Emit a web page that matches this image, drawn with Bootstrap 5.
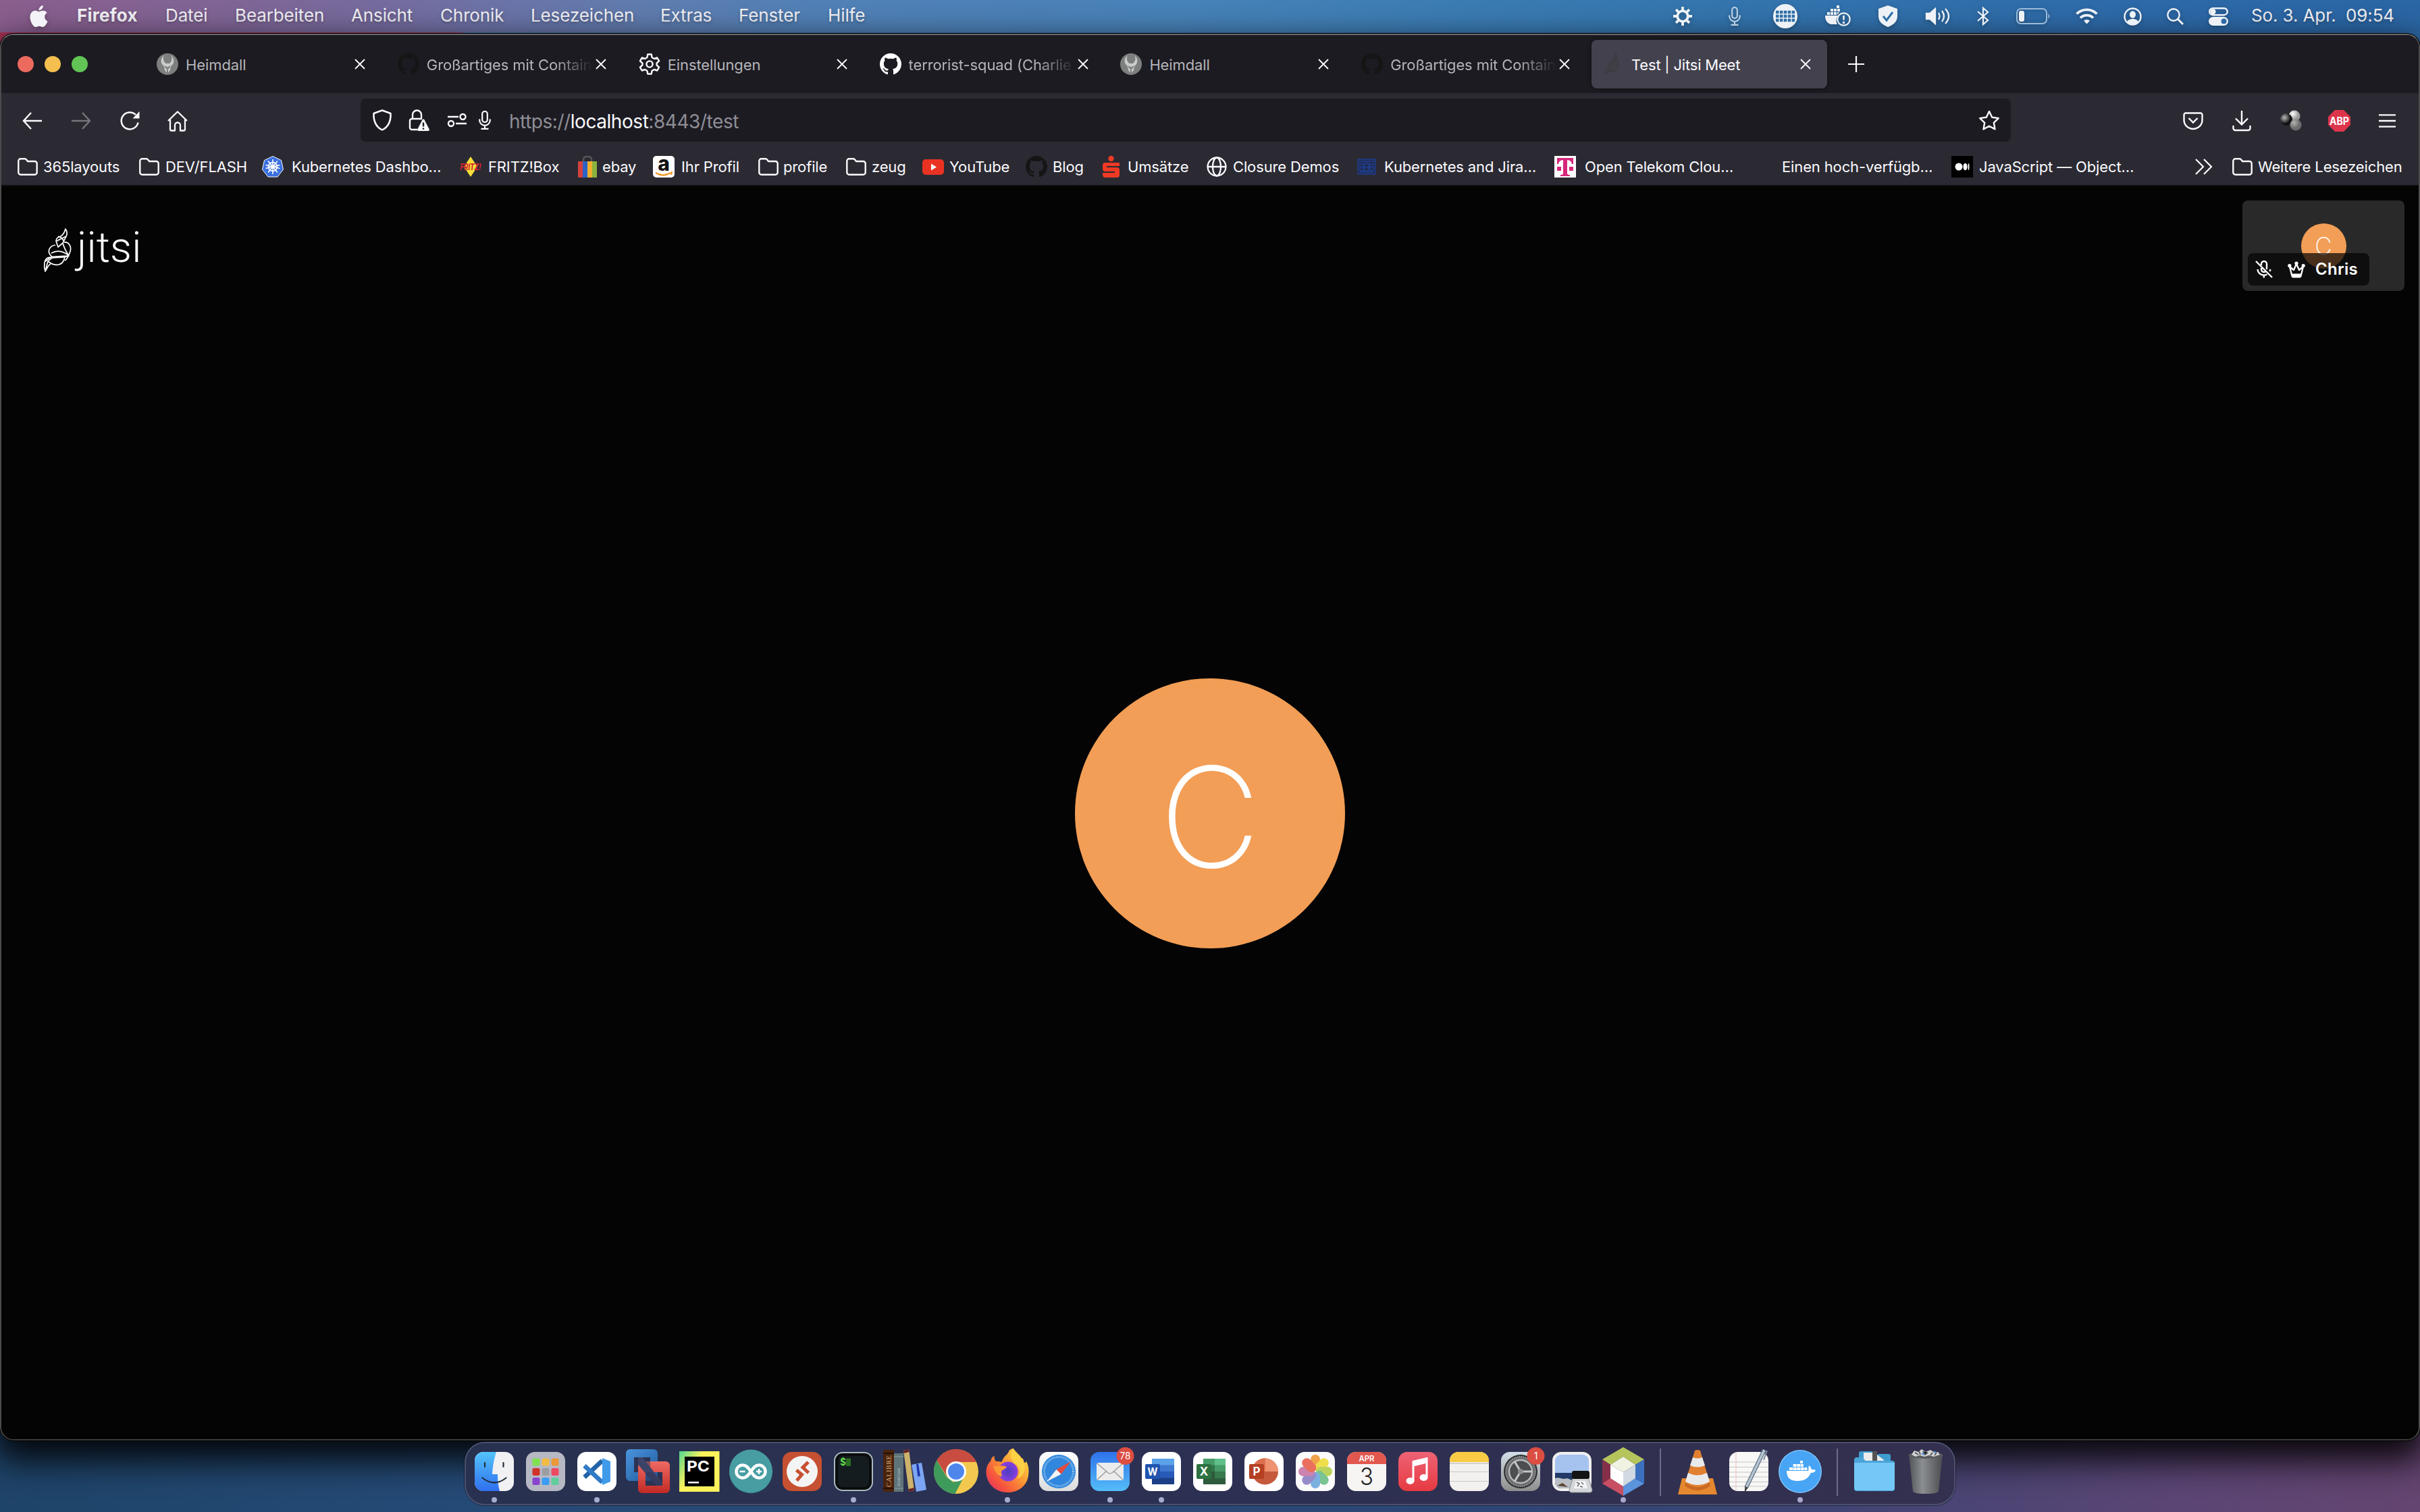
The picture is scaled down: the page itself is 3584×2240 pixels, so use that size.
<!DOCTYPE html>
<html lang="de" data-bs-theme="dark">
<head>
<meta charset="utf-8">
<title>Test | Jitsi Meet</title>
<link rel="stylesheet" href="https://cdn.jsdelivr.net/npm/bootstrap@5.3.0/dist/css/bootstrap.min.css">
<style>
html,body{height:100%}
body{font-family:Inter,"Noto Sans",sans-serif;color:#fbfbfe;overflow:hidden;
 background:linear-gradient(90deg,rgba(0,0,0,0) 60%,rgba(116,66,110,.6) 100%) 0 2100px/100% 140px no-repeat,
 linear-gradient(90deg,#1f4469,#254a76 20%,#2e4574 75%,#46487a 90%,#4d4873) 0 2100px/100% 140px no-repeat,
 linear-gradient(90deg,#a83257 0,#a83257 680px,#3f6ea2 690px,#2c68a6)}
a{color:inherit;text-decoration:none}
svg{display:block;overflow:visible}
svg text{font-family:Inter,sans-serif}
/* system menu */
.sysbar{height:48px;font-size:26px;letter-spacing:-.12px;line-height:46px;white-space:nowrap;color:#f3f2f6;
 background:linear-gradient(90deg,#8a5e8d 0,#7f6596 340px,#766b9e 560px,#6a74a8 760px,#5d7db0 1000px,#5180b6 1200px,#4782b8 1750px,#3b7cb3 2150px,#3374ae 2600px,#2d69a8 3200px,#2b66a4);
 display:grid;align-items:center;text-shadow:0 2px 4px rgba(0,0,0,.25);
 grid-template-columns:44px 70px 131px 103px 172px 132px 134px 192px 116px 132px 1252px 82px 66px 77px 78px 71px 75px 59px 88px 71px 64px 62px 63px 140px 1fr}
.sysbar>a,.sysbar>span{padding-bottom:2px}
.sysbar>a.fw-bold{letter-spacing:.25px}
.sysbar>svg{filter:drop-shadow(0 2px 3px rgba(0,0,0,.25))}
/* browser window */
.win{margin:2px 0 0;height:2084px;border:2px solid #4b4b4c;border-top-color:#6a6a6c;border-bottom-color:#3a3a3a;border-radius:20px;overflow:hidden;background:#040404;box-shadow:0 0 0 1px #000,0 22px 50px 8px rgba(0,0,0,.9)}
.tabstrip{height:86px;background:#1c1b21;padding-left:214px;position:relative;font-size:22px}
.lights{width:104px;height:24px;margin-left:-190px;margin-right:86px}
.lights i{width:24px;height:24px;border-radius:50%}
.tb{width:349px;height:72px;margin-right:7.85px;padding:0 24px 0 16px;border-radius:8px;color:#b5b4ba;flex:none}
.tb.active{background:#42414d;color:#fbfbfe;box-shadow:0 0 6px rgba(0,0,0,.5)}
.tb .lbl{width:250px;margin-left:11px;white-space:nowrap;flex:none;padding-top:3px;letter-spacing:-.1px}
.tb.active .lbl{letter-spacing:-.2px}
.tb .cut{-webkit-mask:linear-gradient(90deg,#000 190px,transparent 246px);mask:linear-gradient(90deg,#000 190px,transparent 246px)}
.tools{height:82px;background:#2b2a33;display:grid;align-items:center;color:#fbfbfe;
 grid-template-columns:31px 72.5px 72.5px 70px 286px 2444px 255px 73px 71px 71px 75px 1fr}
.url{height:64px;background:#1c1b22;border-radius:8px;display:grid;align-items:center;font-size:28px;letter-spacing:-.45px;white-space:nowrap;margin-bottom:2px;
 grid-template-columns:17px 55px 57px 46px 45px 2176px 1fr}
.url>span:last-of-type{padding-top:3px}
.dim{color:#8f8e96}
.marks{height:54px;background:#2b2a33;display:grid;align-items:center;font-size:22px;letter-spacing:-.14px;white-space:nowrap;
 grid-template-columns:24px 38px 142px 39px 143px 44px 249px 42px 133px 36px 75px 42px 114px 37px 93px 38px 75px 40px 113px 40px 74px 37px 117px 39px 184px 40px 252px 45px 253px 39px 251px 41px 320px 55px 38px 1fr}
.marks a{display:contents}
.marks a>span{padding-top:1px}
.marks a>span:empty{padding:0}
/* meeting */
.stage{height:1860px;border-top:2px solid #0e0e11;background:#040404;position:relative}
.brand{position:absolute;left:62px;top:62px;font-family:Roboto,sans-serif;font-weight:300;font-size:63px;line-height:64px;letter-spacing:.1px;color:#fff}
.brand span{margin-top:-3px;margin-left:6px}
.ava{width:400px;height:400px;border-radius:50%;background:#f29e56;color:#fff;font-weight:200;font-size:206px;line-height:400px}
.tile{position:absolute;right:21px;top:21px;width:240px;height:134px;border-radius:8px;background:#292929}
.ava-s{width:67px;height:67px;border-radius:50%;background:#f29e56;color:#fff;font-weight:200;font-size:35px;line-height:67px}
.tag{position:absolute;left:8px;top:78px;width:180px;height:48px;border-radius:8px;background:rgba(4,4,4,.72);font-weight:600;font-size:24px;letter-spacing:.3px;color:#fff;
 display:grid;align-items:center;grid-template-columns:11px 48px 41px 1fr}
/* dock */
.dockbar{height:94px;width:2208px;border-radius:30px;border:2px solid #4b506e;padding:0 4px;background:linear-gradient(90deg,#283150,#2c3052 50%,#34304f);box-shadow:0 0 0 1px rgba(0,0,0,.4)}
.dockbar svg{width:76px;height:94px;margin-top:-2px;flex:none}
.rule{width:2px;height:70px;margin:0 16px 4px;background:#6c6b88;align-self:center}
</style>
<script src="https://cdn.jsdelivr.net/npm/bootstrap@5.3.0/dist/js/bootstrap.bundle.min.js"></script>
</head>
<body class="d-flex flex-column m-0">
<svg width="0" height="0" class="position-absolute">
<defs>
<symbol id="gh" viewBox="0 0 16 16"><path d="M8 0C3.58 0 0 3.58 0 8c0 3.54 2.29 6.53 5.47 7.59.4.07.55-.17.55-.38 0-.19-.01-.82-.01-1.49-2.01.37-2.53-.49-2.69-.94-.09-.23-.48-.94-.82-1.13-.28-.15-.68-.52-.01-.53.63-.01 1.08.58 1.23.82.72 1.21 1.87.87 2.33.66.07-.52.28-.87.51-1.07-1.78-.2-3.64-.89-3.64-3.95 0-.87.31-1.59.82-2.15-.08-.2-.36-1.02.08-2.12 0 0 .67-.21 2.2.82.64-.18 1.32-.27 2-.27.68 0 1.36.09 2 .27 1.53-1.04 2.2-.82 2.2-.82.44 1.1.16 1.92.08 2.12.51.56.82 1.27.82 2.15 0 3.07-1.87 3.75-3.65 3.95.29.25.54.73.54 1.48 0 1.07-.01 1.93-.01 2.2 0 .21.15.46.55.38A8.013 8.013 0 0016 8c0-4.42-3.58-8-8-8z"/></symbol>
<symbol id="x" viewBox="0 0 16 16"><path d="M1 1l14 14M15 1L1 15" stroke="#fbfbfe" stroke-width="1.8" fill="none"/></symbol>
<symbol id="folder" viewBox="0 0 30 26"><path d="M1.3 4.5a3.2 3.2 0 013.2-3.2h6.2c1.4 0 2 .6 3 1.9l1.400 1.800h10.400a3.200 3.200 0 013.200 3.200v13.300a3.200 3.200 0 01-3.200 3.200H4.500a3.200 3.200 0 01-3.200-3.200z" fill="none" stroke="#fbfbfe" stroke-width="2.400"/></symbol>
<symbol id="heim" viewBox="0 0 32 32"><circle cx="16" cy="16" r="16" fill="#7c7f7e"/><path d="M10.500 3c-4 4-5 9-2.500 13 1 1.500 2.500 2 3 4l1 5 4 5 4-5 1-5c.5-2 2-2.500 3-4 2.500-4 1.500-9-2.500-13 2 5 1 9-2.500 12h-5.500c-3.500-3-4.500-7-3-12z" fill="#c9cccb"/><path d="M11 18l5 2.500 5-2.500-2 4-3 2-3-2zM15 24h2v6h-2z" fill="#7c7f7e"/></symbol>
<symbol id="mic" viewBox="0 0 18 28"><rect x="5.200" y="1" width="7.600" height="16" rx="3.800" fill="none" stroke="currentColor" stroke-width="2.200"/><path d="M1.200 12.500v1.500a7.800 7.800 0 0015.600 0v-1.500M9 22v4.500M3.500 26.800h11" fill="none" stroke="currentColor" stroke-width="2.200"/></symbol>
<linearGradient id="gb" x1="0" y1="0" x2="0" y2="1"><stop offset="0" stop-color="#54c4fa"/><stop offset="1" stop-color="#2f6fef"/></linearGradient>
<linearGradient id="gm" x1="0" y1="0" x2="0" y2="1"><stop offset="0" stop-color="#2f72ec"/><stop offset="1" stop-color="#54bdf8"/></linearGradient>
<linearGradient id="gw" x1="0" y1="0" x2="0" y2="1"><stop offset="0" stop-color="#fff"/><stop offset="1" stop-color="#dcdcdc"/></linearGradient>
<linearGradient id="gr" x1="0" y1="0" x2="0" y2="1"><stop offset="0" stop-color="#ee6376"/><stop offset="1" stop-color="#e63a41"/></linearGradient>
<linearGradient id="gf" x1="1" y1="0" x2="0" y2="1"><stop offset="0" stop-color="#fff04e"/><stop offset=".45" stop-color="#fb9633"/><stop offset=".75" stop-color="#f5503f"/><stop offset="1" stop-color="#d92a78"/></linearGradient>
<radialGradient id="gp"><stop offset="0" stop-color="#4c3fc0"/><stop offset="1" stop-color="#8a3fe0"/></radialGradient>
<linearGradient id="gt" x1="0" y1="0" x2="1" y2="0"><stop offset="0" stop-color="#505355"/><stop offset=".4" stop-color="#8c8f92"/><stop offset="1" stop-color="#4a4c50"/></linearGradient>
<linearGradient id="gpc" x1="0" y1="0" x2="1" y2=".6"><stop offset="0" stop-color="#4fd68f"/><stop offset=".45" stop-color="#fcf25b"/><stop offset="1" stop-color="#fcf25b"/></linearGradient>
<linearGradient id="gsp" x1="0" y1="0" x2="0" y2="1"><stop offset="0" stop-color="#d2dee8"/><stop offset="1" stop-color="#8d8d8b"/></linearGradient>
<linearGradient id="gvb" x1="0" y1="0" x2="1" y2="1"><stop offset="0" stop-color="#4a96de"/><stop offset="1" stop-color="#1d579a"/></linearGradient>
<linearGradient id="gvr" x1="0" y1="0" x2="0" y2="1"><stop offset="0" stop-color="#ee6a63"/><stop offset="1" stop-color="#c22a24"/></linearGradient>
<radialGradient id="b1" cx=".35" cy=".3"><stop offset="0" stop-color="#fff"/><stop offset="1" stop-color="#999"/></radialGradient>
<radialGradient id="b2" cx=".35" cy=".35"><stop offset="0" stop-color="#bbb"/><stop offset="1" stop-color="#111"/></radialGradient>
</defs></svg>

<nav class="sysbar">
<span></span>
<svg width="27" height="32" viewBox="2 0 20 24" fill="#f3f2f6"><path d="M12.152 6.896c-.948 0-2.415-1.078-3.960-1.040-2.040.027-3.910 1.183-4.961 3.014-2.117 3.675-.546 9.103 1.519 12.090 1.013 1.454 2.208 3.090 3.792 3.039 1.520-.065 2.090-.987 3.935-.987 1.831 0 2.350.987 3.960.948 1.637-.026 2.676-1.480 3.676-2.948 1.156-1.688 1.636-3.325 1.662-3.415-.039-.013-3.182-1.221-3.220-4.857-.026-3.040 2.480-4.494 2.597-4.559-1.429-2.090-3.623-2.324-4.390-2.376-2-.156-3.675 1.090-4.610 1.090zM15.530 3.830c.843-1.012 1.400-2.427 1.245-3.830-1.207.052-2.662.805-3.532 1.818-.780.896-1.454 2.338-1.273 3.714 1.338.104 2.715-.688 3.559-1.701"/></svg>
<a class="fw-bold" href="#">Firefox</a><a href="#">Datei</a><a href="#">Bearbeiten</a><a href="#">Ansicht</a><a href="#">Chronik</a><a href="#">Lesezeichen</a><a href="#">Extras</a><a href="#">Fenster</a><a href="#">Hilfe</a>
<svg width="28" height="28" viewBox="0 0 28 28" fill="none" stroke="#eef2f6"><circle cx="14" cy="14" r="7.800" stroke-width="3.800"/><path d="M14 0v5M14 23v5M0 14h5M23 14h5M4.100 4.100l3.500 3.500M20.400 20.400l3.500 3.500M23.900 4.100l-3.500 3.500M7.600 20.400l-3.500 3.500" stroke-width="3.800"/></svg>
<svg width="18" height="28" color="#b9cfe3"><use href="#mic"/></svg>
<svg width="36" height="36" viewBox="0 0 36 36"><circle cx="18" cy="18" r="18" fill="#eef2f6"/><g stroke="#2f6fa8" stroke-width="4.500" stroke-dasharray="4.500 1.400"><path d="M4 12h28.500M4 18h28.500M4 24h28.500"/></g></svg>
<svg width="38" height="32" viewBox="0 0 38 32" fill="#eef2f6"><path d="M0 15h19a12 12 0 00-1 13H9C3 27 0 22 0 15zM3 10h4v4H3zM8 10h4v4H8zM13 10h4v4h-4zM8 5h4v4H8zM13 5h4v4h-4zM17 0h4v4h-4zM18 5h4v4h-4zM18 10h3l-3 4z"/><circle cx="27.500" cy="20.500" r="9.200" fill="none" stroke="#eef2f6" stroke-width="2.200"/><path d="M26 15h3l-.5 7h-2zM26 24h3v3h-3z"/></svg>
<svg width="30" height="32" viewBox="0 0 30 32"><path d="M15 0l14 5v11c0 8-6 13-14 16C7 29 1 24 1 16V5z" fill="#eef2f6"/><path d="M8 16l5 6 9-12" fill="none" stroke="#2f6fa8" stroke-width="3"/></svg>
<svg width="36" height="26" viewBox="0 0 36 26" fill="none" stroke="#eef2f6" stroke-width="2.300"><path d="M1 9v8h5l8 7V2L6 9z" fill="#eef2f6"/><path d="M19 8q3 5 0 10M24 5q6 8 0 16M29 2q10 11 0 22"/></svg>
<svg width="20" height="28" viewBox="0 0 20 28"><path d="M2 7l15 13-7 6V2l7 6L2 21" fill="none" stroke="#eef2f6" stroke-width="2.200"/></svg>
<svg width="51" height="24" viewBox="0 0 51 24"><rect x="1" y="1" width="44" height="22" rx="6" fill="none" stroke="#9bbbd9" stroke-width="2"/><rect x="4" y="4" width="8" height="16" rx="3" fill="#eef2f6"/><path d="M47.500 8q4 4 0 8z" fill="#9bbbd9"/></svg>
<svg width="33" height="24" viewBox="0 0 33 24" fill="none" stroke="#eef2f6" stroke-width="3.800"><path d="M1.500 8.500a21.500 21.500 0 0130 0M7 14.500a13.500 13.500 0 0119 0"/><path d="M16.500 23.500l-4.500-4.700a6.500 6.500 0 019 0z" fill="#eef2f6" stroke="none"/></svg>
<svg width="27" height="27" viewBox="0 0 27 27"><circle cx="13.500" cy="13.500" r="12" fill="none" stroke="#eef2f6" stroke-width="2.400"/><ellipse cx="13.500" cy="10.500" rx="4.500" ry="5.200" fill="#eef2f6"/><path d="M5 21.500c2-6 15-6 17 0a12 12 0 01-17 0z" fill="#eef2f6"/></svg>
<svg width="25" height="25" viewBox="0 0 25 25" fill="none" stroke="#eef2f6"><circle cx="10" cy="10" r="8.700" stroke-width="2.400"/><path d="M16.500 16.500l7.500 7.500" stroke-width="3"/></svg>
<svg width="30" height="27" viewBox="0 0 30 27"><rect x="1.200" y="1.200" width="26.500" height="10" rx="5" fill="none" stroke="#eef2f6" stroke-width="2.400"/><circle cx="6.500" cy="6.200" r="4" fill="#eef2f6"/><rect x="0" y="14" width="29" height="13" rx="6.500" fill="#eef2f6"/><circle cx="22.500" cy="20.500" r="4" fill="#2f6aa6"/></svg>
<span>So. 3. Apr.</span><span>09:54</span>
</nav>

<main class="win">
<div class="tabstrip d-flex align-items-center">
<div class="lights d-flex justify-content-between flex-shrink-0"><i style="background:#ec6a5e"></i><i style="background:#f4bf4f"></i><i style="background:#61c454"></i></div>
<div class="tb d-flex align-items-center"><svg width="32" height="32"><use href="#heim"/></svg><span class="lbl">Heimdall</span><svg width="16" height="16" class="ms-auto"><use href="#x"/></svg></div>
<div class="tb d-flex align-items-center"><svg width="32" height="32" fill="#151515"><use href="#gh"/></svg><span class="lbl cut">Großartiges mit Contain</span><svg width="16" height="16" class="ms-auto"><use href="#x"/></svg></div>
<div class="tb d-flex align-items-center"><svg width="32" height="32" viewBox="0 0 32 32" fill="none" stroke="#fbfbfe" stroke-width="2.400"><path d="M13.300 1.500h5.400l1 4.700 3.200 1.800 4.400-1.500 2.800 4.800-3.500 3.200v3l3.500 3.200-2.800 4.800-4.400-1.500-3.200 1.800-1 4.700h-5.400l-1-4.700L9.100 24l-4.400 1.500-2.800-4.800 3.500-3.200v-3l-3.500-3.200L4.700 6.500 9.100 8l3.200-1.800z" stroke-linejoin="round"/><circle cx="16" cy="16" r="4.600"/></svg><span class="lbl">Einstellungen</span><svg width="16" height="16" class="ms-auto"><use href="#x"/></svg></div>
<div class="tb d-flex align-items-center"><svg width="32" height="32" fill="#fff"><use href="#gh"/></svg><span class="lbl cut">terrorist-squad (Charlie</span><svg width="16" height="16" class="ms-auto"><use href="#x"/></svg></div>
<div class="tb d-flex align-items-center"><svg width="32" height="32"><use href="#heim"/></svg><span class="lbl">Heimdall</span><svg width="16" height="16" class="ms-auto"><use href="#x"/></svg></div>
<div class="tb d-flex align-items-center"><svg width="32" height="32" fill="#151515"><use href="#gh"/></svg><span class="lbl cut">Großartiges mit Contain</span><svg width="16" height="16" class="ms-auto"><use href="#x"/></svg></div>
<div class="tb active d-flex align-items-center"><svg width="32" height="32" viewBox="0 0 32 32"><path d="M20 1c3 5 1 8-1 9 4 1 6 5 4 10-1 4-6 8-11 7-4 0-5 2-6 4-1-4-1-7 2-9 2-1 2-4 2-6 1-4 4-4 6-5-1-5 3-6 4-10z" fill="#3f3f45" stroke="#37373b"/></svg><span class="lbl">Test | Jitsi Meet</span><svg width="16" height="16" class="ms-auto"><use href="#x"/></svg></div>
<svg width="24" height="24" viewBox="0 0 24 24" style="margin-left:23px"><path d="M12 0v24M0 12h24" stroke="#fbfbfe" stroke-width="2.200"/></svg>
</div>

<div class="tools">
<span></span>
<svg width="30" height="26" viewBox="0 0 30 26" fill="none" stroke="#fbfbfe" stroke-width="2.400"><path d="M29 13H2M13 1L2 13l11 12"/></svg>
<svg width="30" height="26" viewBox="0 0 30 26" fill="none" stroke="#76757c" stroke-width="2.400"><path d="M0 13h27M16 1l11 12-11 12"/></svg>
<svg width="30" height="30" viewBox="0 0 30 30"><path d="M26.500 17.500A12.500 12.500 0 1123 6" fill="none" stroke="#fbfbfe" stroke-width="2.500"/><path d="M28.500 1v10.500H18.500z" fill="#fbfbfe"/></svg>
<svg width="30" height="31" viewBox="0 0 30 31" fill="none" stroke="#fbfbfe" stroke-width="2.300" stroke-linejoin="round"><path d="M1 15L15 1.500 29 15M4 13v14.500a2 2 0 002 2h5v-8a4 4 0 018 0v8h5a2 2 0 002-2V13"/></svg>
<div class="url">
<span></span>
<svg width="30" height="32" viewBox="0 0 30 32"><path d="M15 1.500L27.500 6q.8 18-12.500 24.500Q1.700 24 2.500 6z" fill="none" stroke="#fbfbfe" stroke-width="2.500" stroke-linejoin="round"/></svg>
<svg width="30" height="32" viewBox="0 0 30 32"><path d="M5 14V8a6.500 6.500 0 0113 0v6M12 30H4a3 3 0 01-3-3V17a3 3 0 013-3h15" fill="none" stroke="#fbfbfe" stroke-width="2.400"/><path d="M21 14.500a1.500 1.500 0 011.500 1L30 30q0 2-2 2H14q-2 0-2-2l7.500-14.500a1.500 1.500 0 011.500-1z" fill="#fbfbfe"/><path d="M21 19.500v6M21 27.500v2.200" stroke="#1c1b22" stroke-width="2.400"/></svg>
<svg width="28" height="22" viewBox="0 0 28 22" fill="none" stroke="#fbfbfe" stroke-width="2.400"><path d="M0 6h16M12 16h16"/><circle cx="22.500" cy="6" r="4"/><circle cx="5" cy="16" r="4"/></svg>
<svg width="18" height="28"><use href="#mic"/></svg>
<span><span class="dim">https://</span>localhost<span class="dim">:8443/test</span></span>
<svg width="32" height="31" viewBox="0 0 32 31"><path d="M16 2l4.200 8.800 9.600 1.300-7 6.700 1.700 9.600-8.500-4.700-8.500 4.700 1.700-9.600-7-6.700 9.600-1.300z" fill="none" stroke="#fbfbfe" stroke-width="2.400" stroke-linejoin="round"/></svg>
</div>
<span></span>
<svg width="30" height="26" viewBox="0 0 30 26" fill="none" stroke="#fbfbfe" stroke-width="2.400"><path d="M4 1.500h22a2.500 2.500 0 012.500 2.500v8a13.500 13 0 01-27 0V4A2.500 2.500 0 014 1.500z"/><path d="M8.500 9l6.500 6.500L21.500 9"/></svg>
<svg width="28" height="30" viewBox="0 0 28 30" fill="none" stroke="#fbfbfe" stroke-width="2.400"><path d="M14 0v20M5 11.500l9 9 9-9M1.500 22v4a3 3 0 003 3h19a3 3 0 003-3v-4"/></svg>
<svg width="32" height="32" viewBox="0 0 32 32"><circle cx="21" cy="9" r="8.500" fill="url(#b1)"/><circle cx="9" cy="14" r="9" fill="url(#b2)"/><circle cx="23" cy="22" r="8.500" fill="url(#b1)" style="filter:brightness(.7)"/></svg>
<svg width="33" height="32" viewBox="0 0 33 32"><path d="M10 0h13l10 10v12L23 32H10L0 22V10z" fill="#de354c"/><text x="16.500" y="21.500" font-size="15.500" font-weight="700" fill="#fff" text-anchor="middle" textLength="29" lengthAdjust="spacingAndGlyphs">ABP</text></svg>
<svg width="25" height="20" viewBox="0 0 25 20"><path d="M0 1.300h25M0 10h25M0 18.700h25" stroke="#fbfbfe" stroke-width="2.300"/></svg>
</div>

<div class="marks">
<span></span>
<a href="#"><svg width="30" height="26"><use href="#folder"/></svg><span>365layouts</span></a>
<a href="#"><svg width="30" height="26"><use href="#folder"/></svg><span>DEV/FLASH</span></a>
<a href="#"><svg width="32" height="32" viewBox="0 0 32 32"><path d="M16 .5l12.500 6L31.500 20 23 31H9L.5 20l3-13.500z" fill="#3a6fe0" stroke="#fff"/><g stroke="#fff" stroke-width="1.600" fill="none"><circle cx="16" cy="16" r="6.500"/><path d="M16 5v22M5.500 13.500l21 5M9 24.500l14-17M9 7.500l14 17M26.500 13.500l-21 5"/></g></svg><span>Kubernetes Dashbo…</span></a>
<a href="#"><svg width="32" height="32" viewBox="0 0 32 32"><path d="M16 1l10 15-10 15L6 16z" fill="#f6de3b"/><text x="16" y="20.500" font-size="13" font-weight="800" font-style="italic" fill="#d8242f" text-anchor="middle" textLength="31" lengthAdjust="spacingAndGlyphs">FRITZ!</text></svg><span>FRITZ!Box</span></a>
<a href="#"><svg width="28" height="32" viewBox="0 0 28 32"><path d="M8 10V5q0-4 6-4t6 4v5" fill="none" stroke="#555" stroke-width="2.500"/><path d="M0 8h7v24H0z" fill="#d5423b"/><path d="M7 8h7v24H7z" fill="#2b63c6"/><path d="M14 8h7v24h-7z" fill="#efaf2d"/><path d="M21 8h7v24h-7z" fill="#8bb23c"/></svg><span>ebay</span></a>
<a href="#"><svg width="32" height="32" viewBox="0 0 32 32"><rect width="32" height="32" rx="5" fill="#fff"/><text x="16" y="22" font-size="30" font-weight="800" fill="#111" text-anchor="middle">a</text><path d="M4 25q11 7 22 0M28 23l-1 5" fill="none" stroke="#f29a2e" stroke-width="2.400"/></svg><span>Ihr Profil</span></a>
<a href="#"><svg width="30" height="26"><use href="#folder"/></svg><span>profile</span></a>
<a href="#"><svg width="30" height="26"><use href="#folder"/></svg><span>zeug</span></a>
<a href="#"><svg width="32" height="23" viewBox="0 0 32 23"><rect width="32" height="23" rx="5" fill="#ea3223"/><path d="M13 6.500l8 5-8 5z" fill="#fff"/></svg><span>YouTube</span></a>
<a href="#"><svg width="32" height="32" fill="#151515"><use href="#gh"/></svg><span>Blog</span></a>
<a href="#"><svg width="25" height="32" viewBox="0 0 25 32"><circle cx="12.500" cy="4" r="4.200" fill="#ee3a24"/><path d="M4 10h21v5H6v2h15q4 0 4 4v7q0 4-4 4H4q-4 0-4-4v-3h18v-2H4q-4 0-4-4v-5q0-4 4-4z" fill="#ee3a24"/></svg><span>Umsätze</span></a>
<a href="#"><svg width="30" height="30" viewBox="0 0 30 30" fill="none" stroke="#fbfbfe" stroke-width="2.300"><circle cx="15" cy="15" r="13.500"/><ellipse cx="15" cy="15" rx="6" ry="13.500"/><path d="M1.500 15h27"/></svg><span>Closure Demos</span></a>
<a href="#"><svg width="28" height="24" viewBox="0 0 28 24" fill="none" stroke="#1f3f92" stroke-width="1.400"><path d="M1 1h26v22H1zM1 4h26M4 20h20M4 8h5v10H4zM11 7h6v11h-6zM19 8h5v10h-5zM4 13h20" fill="#222a4c"/></svg><span>Kubernetes and Jira…</span></a>
<a href="#"><svg width="32" height="32" viewBox="0 0 32 32"><path fill="#fff" d="M0 0h32v32H0z"/><path d="M4 3h24v9h-2q-1-6-7-6v20q0 2 4 2v2H9v-2q4 0 4-2V6q-6 0-7 6H4zM4 16h6v6H4zM22 16h6v6h-6z" fill="#d6277a"/></svg><span>Open Telekom Clou…</span></a>
<a href="#"><span></span><span>Einen hoch-verfügb…</span></a>
<a href="#"><svg width="32" height="32" viewBox="0 0 32 32"><path d="M0 0h32v32H0z"/><circle cx="11" cy="16" r="5.500" fill="#fff"/><ellipse cx="20.500" cy="16" rx="3" ry="5.200" fill="#fff"/><ellipse cx="25.500" cy="16" rx="1" ry="5" fill="#fff"/></svg><span>JavaScript — Object…</span></a>
<svg width="26" height="24" viewBox="0 0 26 24" fill="none" stroke="#fbfbfe" stroke-width="2.200"><path d="M1 1l11 11L1 23M13 1l11 11-11 11"/></svg>
<a href="#"><svg width="30" height="26"><use href="#folder"/></svg><span>Weitere Lesezeichen</span></a>
</div>

<section class="stage d-flex justify-content-center">
<div class="brand d-flex"><svg width="44" height="66" viewBox="0 0 44 66" fill="none" stroke="#fff" stroke-width="1.700" stroke-linejoin="round"><path d="M33 1c4 6 2 10-1 15l-3 6-7 6-3-9q0-5 7-7 5-3 7-11zM22 12l6 3 6-3M20 19l8-4 3 5M18 25c-8 1-12 8-8 14l3 4M31 21c8-1 12 8 8 16-2 6-4 9-7 11M29 22c2 8 5 13 9 19M13 42c5 1 12-1 25-1-8 3-16 2-24 3-3 1-5 3-7 5 10 8 22 8 25-6M12 37c9-5 18-3 26 4M14 44c-5-1-10-2-12 7-1 6 0 10 1 13 3-5 4-9 9-12M7 49l-4 15M2 50l9-7"/></svg><span>jitsi</span></div>
<div class="ava text-center align-self-start" style="margin-top:729px"><div style="padding-top:5px">C</div></div>
<div class="tile"><div class="ava-s text-center mx-auto" style="margin-top:34px">C</div>
<div class="tag"><span></span>
<svg width="26" height="26" viewBox="0 0 26 26" fill="none" stroke="#fff" stroke-width="2.400"><path d="M9 7V5a4 4 0 018 0v8M9 11v2a4 4 0 006 3.500M3.500 13a9.500 9.500 0 0014 7.500M21.500 16l1-3M12.800 22v3.500M1 1l24 24"/></svg>
<svg width="26" height="25" viewBox="0 0 26 25"><path d="M3 8l3.500 14q.3 1.300 1.500 1.300h10q1.200 0 1.500-1.300L23 8l-6 5-4-9-4 9z" fill="none" stroke="#fff" stroke-width="2.300" stroke-linejoin="round"/><path d="M5.500 18.500h15l-1 5h-13z" fill="#fff"/><circle cx="13" cy="3" r="2.600" fill="#fff"/><circle cx="2.800" cy="6.500" r="2.600" fill="#fff"/><circle cx="23.200" cy="6.500" r="2.600" fill="#fff"/></svg>
<span>Chris</span></div></div>
</section>
</main>

<footer class="dockbar d-flex mx-auto mt-auto position-relative" style="margin-bottom:10px">
<svg viewBox="0 0 76 94"><rect x="9" y="15" width="58" height="58" rx="13" fill="#f1f1f4"/><path d="M41 15C37 28 35.500 39 35 48h8c0 9 1 18 3 25H22a13 13 0 01-13-13V28a13 13 0 0113-13z" fill="url(#gb)"/><path d="M24 31v6M51.500 31v6M20.500 53.500q17.500 14 35 0" fill="none" stroke="#24303c" stroke-width="2.200" stroke-linecap="round"/><circle cx="38" cy="86" r="4" fill="#a6acd0"/></svg>
<svg viewBox="0 0 76 94"><rect x="9" y="15" width="58" height="58" rx="13" fill="#b6b9c4"/><g><rect x="18.500" y="24.500" width="11" height="11" rx="2.500" fill="#7fe24e"/><rect x="32.500" y="24.500" width="11" height="11" rx="2.500" fill="#f2bb42"/><rect x="46.500" y="24.500" width="11" height="11" rx="2.500" fill="#ec9738"/><rect x="18.500" y="39" width="11" height="11" rx="2.500" fill="#d13329"/><rect x="32.500" y="39" width="11" height="11" rx="2.500" fill="#9b9da0"/><rect x="46.500" y="39" width="11" height="11" rx="2.500" fill="#ec4963"/><rect x="18.500" y="53" width="11" height="11" rx="2.500" fill="#8a43cc"/><rect x="32.500" y="53" width="11" height="11" rx="2.500" fill="#3d9cf4"/><rect x="46.500" y="53" width="11" height="11" rx="2.500" fill="#62cd9c"/></g></svg>
<svg viewBox="0 0 76 94"><rect x="9" y="15" width="58" height="58" rx="13" fill="#fff"/><path d="M19.500 52.500L46 28" stroke="#2263a8" stroke-width="6.500"/><path d="M19.500 35.500L46 60" stroke="#2f7bc6" stroke-width="6.500"/><path d="M46 24l12 5v30l-12 5z" fill="#3f9bea"/><circle cx="38" cy="86" r="4" fill="#a6acd0"/></svg>
<svg viewBox="0 0 76 94"><path d="M11 11h35a6 6 0 016 6v35a6 6 0 01-6 6H11a6 6 0 01-6-6V17a6 6 0 016-6zM17 23v22h24V23z" fill="url(#gvb)" fill-rule="evenodd"/><path d="M29 29h35a6 6 0 016 6v35a6 6 0 01-6 6H29a6 6 0 01-6-6V35a6 6 0 016-6zM34 45v20h25V45z" fill="url(#gvr)" fill-rule="evenodd"/><path d="M23 34V23h7l29 38v4h-9z" fill="#3c4368"/><path d="M17 23h24v14l-11-14h-7v22h-6zM34 45h9l16 16v-16h-8l8 16v4H34z" fill="#2d3456" opacity=".55"/></svg>
<svg viewBox="0 0 76 94"><path d="M8 14h59.500v60H8z" fill="url(#gpc)"/><path d="M16 22h44v44H16z"/><text x="19" y="44" font-size="22" font-weight="700" fill="#fff" textLength="34" lengthAdjust="spacingAndGlyphs">PC</text><path d="M21 59h16v2.500H21z" fill="#fff"/></svg>
<svg viewBox="0 0 76 94"><circle cx="38" cy="44.500" r="32" fill="#2d7478"/><circle cx="38" cy="43.500" r="32" fill="#479da2"/><g fill="none" stroke="#fff" stroke-width="4.500"><path d="M38 44c-4-6-7-9.500-12-9.500a9.500 9.500 0 000 19c5 0 8-3.500 12-9.500s7-9.500 12-9.500a9.500 9.500 0 010 19c-5 0-8-3.500-12-9.500z"/><path d="M21.500 44h8M46 44h8M50 40v8" stroke-width="2.500"/></g></svg>
<svg viewBox="0 0 76 94"><rect x="9" y="15" width="58" height="58" rx="13" fill="#c65032"/><circle cx="38" cy="44" r="23" fill="#f5f4f4"/><path d="M29.500 42l8 6.500-7.500 9M47 30l-8 8 8.500 8" fill="none" stroke="#c65032" stroke-width="5"/></svg>
<svg viewBox="0 0 76 94"><rect x="9" y="15" width="58" height="58" rx="13" fill="#a9b8be"/><rect x="11" y="17" width="54" height="54" rx="11" fill="#0a0c0d"/><rect x="15" y="21" width="46" height="46" rx="7" fill="#141c20"/><path d="M27 24.500h7V36h-7z" fill="#2a6e22"/><text x="18" y="35" font-size="14" font-weight="600" fill="#68e04c">$</text><circle cx="38" cy="86" r="4" fill="#a6acd0"/></svg>
<svg viewBox="0 0 76 94"><path d="M6 12h16v62H6z" fill="#4b230d"/><path d="M6 17h16M6 69h16" stroke="#1c0d05" stroke-width="1.500"/><path d="M22 17h14v57H22z" fill="#5f7478"/><path d="M22 22h14M22 69h14" stroke="#8ea1a4"/><text transform="translate(17.500 67) rotate(-90)" font-size="10.500" fill="#d6a876" textLength="47" style="font-family:'Liberation Serif',serif">CALIBRE</text><text transform="translate(31 66) rotate(-90)" font-size="7" font-style="italic" fill="#a9bcc0" textLength="27" style="font-family:'Liberation Serif',serif">Kovid Goyal</text><path d="M36 13l8-2 8 61-8 2z" fill="#cdb26c"/><path d="M36 13l8-2 .5 4-8 2zM43.500 70l8-2 .5 4-8 2z" fill="#682126"/><path d="M48 34l15-3 7 40-15 3z" fill="#7ba5f2"/><path d="M55 33l3-.6 3 19-2-1-1.500 2z" fill="#1732a6"/></svg>
<svg viewBox="0 0 76 94"><circle cx="38" cy="44" r="33" fill="#f3c84e"/><path d="M9.400 27.500A33 33 0 0168 30H38L25 52z" fill="#c94c41"/><path d="M9.400 27.500L24 52l10 8L50 51 36.500 77A33 33 0 019.400 27.500z" fill="#3f9b5c"/><circle cx="38" cy="44" r="15" fill="#fff"/><circle cx="38" cy="44" r="12" fill="#4f86ec"/></svg>
<svg viewBox="0 0 76 94"><path d="M47 10c4 6 8 8 12 14 3 1 3 4 4 7 1 1 3-2 3-2 4 8 4 14 3 21-2 15-15 25-30 25C20 75 7 62 6.500 45c0-8 3-13 7-17 0-3 2-6 5-7 0 4 1 7 3 8 4 0 6 0 8 1 3-10 10-11 11-17 2-2 4-3 6-3z" fill="url(#gf)"/><circle cx="39" cy="44" r="14.500" fill="url(#gp)"/><path d="M17 35c6 4 9-2 20 2-2 4-7 4-8 7s2 4 0 8c-8-4-10-11-12-17z" fill="#fb9a35"/><path d="M49 33c8 3 9 14 3 22 10-4 16-15 8-28-6-8-11-9-13-17-5 6-6 14 2 23z" fill="#fdd646" opacity=".85"/><circle cx="38" cy="86" r="4" fill="#a6acd0"/></svg>
<svg viewBox="0 0 76 94"><rect x="9" y="15" width="58" height="58" rx="13" fill="url(#gw)"/><circle cx="38" cy="44" r="25" fill="#3187dd"/><circle cx="38" cy="44" r="21.500" fill="none" stroke="#b7dbf7" stroke-width="3" stroke-dasharray=".8 1.500"/><path d="M56 29L41.500 48l-7-7z" fill="#e34b3d"/><path d="M20 59l14.500-18 7 7z" fill="#f4f4f4"/></svg>
<svg viewBox="0 0 76 94"><rect x="9" y="15" width="58" height="58" rx="13" fill="url(#gm)"/><rect x="18" y="31" width="40" height="26" rx="3" fill="#ececec"/><path d="M19 32l16 14q3 2 6 0l16-14M19 56l13-12M57 56L44 44" fill="none" stroke="#9c9c9e" stroke-width="1.500"/><circle cx="60.500" cy="21" r="13" fill="#dc4d42"/><text x="60.500" y="26" font-size="14" fill="#fff" text-anchor="middle" textLength="16" lengthAdjust="spacingAndGlyphs">78</text><circle cx="38" cy="86" r="4" fill="#a6acd0"/></svg>
<svg viewBox="0 0 76 94"><rect x="9" y="15" width="58" height="58" rx="13" fill="#fff"/><path fill="#5ba3e8" d="M24 25h33v10H24z"/><path fill="#3e78cf" d="M24 34.500h33v10H24z"/><path fill="#285ab8" d="M24 44h33v10H24z"/><path fill="#1b3f86" d="M24 53.500h33V63H24z"/><rect x="14" y="33" width="22" height="22" rx="2" fill="#2154ae"/><text x="25" y="50" font-size="16.500" font-weight="700" fill="#fff" text-anchor="middle" textLength="15" lengthAdjust="spacingAndGlyphs">W</text><circle cx="38" cy="86" r="4" fill="#a6acd0"/></svg>
<svg viewBox="0 0 76 94"><rect x="9" y="15" width="58" height="58" rx="13" fill="#fff"/><path fill="#479c68" d="M24 25h17v10H24z"/><path fill="#5fc08a" d="M41 25h16v10H41z"/><path fill="#31754a" d="M24 34.500h17v10H24z"/><path fill="#479c68" d="M41 34.500h16v10H41z"/><path fill="#2d5b3c" d="M24 44h33v19H24z"/><path fill="#377a4e" d="M41 44h16v10H41z"/><rect x="14" y="33" width="22" height="22" rx="2" fill="#2d7141"/><text x="25" y="50" font-size="17" font-weight="700" fill="#fff" text-anchor="middle">X</text></svg>
<svg viewBox="0 0 76 94"><rect x="9" y="15" width="58" height="58" rx="13" fill="#fff"/><circle cx="39.500" cy="44" r="19.500" fill="#c45a3b"/><path d="M39.500 24.500A19.500 19.500 0 0159 44H39.500z" fill="#ee9272"/><path d="M39.500 24.500A19.500 19.500 0 0020 44h19.500z" fill="#dd6e4e"/><rect x="16" y="33" width="22" height="22" rx="2" fill="#b43f22"/><text x="27" y="50" font-size="17" font-weight="700" fill="#fff" text-anchor="middle">P</text></svg>
<svg viewBox="0 0 76 94"><rect x="9" y="15" width="58" height="58" rx="13" fill="#fbfbfb"/><g opacity=".9"><rect x="31" y="19" width="14" height="24" rx="7" fill="#f19a37"/><rect x="31" y="19" width="14" height="24" rx="7" fill="#efdc3a" transform="rotate(45 38 44)"/><rect x="31" y="19" width="14" height="24" rx="7" fill="#b4cf4c" transform="rotate(90 38 44)"/><rect x="31" y="19" width="14" height="24" rx="7" fill="#6cbf86" transform="rotate(135 38 44)"/><rect x="31" y="19" width="14" height="24" rx="7" fill="#6ea9df" transform="rotate(180 38 44)"/><rect x="31" y="19" width="14" height="24" rx="7" fill="#8c80c6" transform="rotate(225 38 44)"/><rect x="31" y="19" width="14" height="24" rx="7" fill="#c877a7" transform="rotate(270 38 44)"/><rect x="31" y="19" width="14" height="24" rx="7" fill="#e9604e" transform="rotate(315 38 44)"/></g></svg>
<svg viewBox="0 0 76 94"><rect x="9" y="15" width="58" height="58" rx="13" fill="#f6f5f4"/><path d="M9 33v-5a13 13 0 0113-13h32a13 13 0 0113 13v5z" fill="#e2584e"/><text x="38" y="28.500" font-size="12" font-weight="600" fill="#fff" text-anchor="middle" textLength="23" lengthAdjust="spacingAndGlyphs">APR</text><text x="38" y="64" font-size="36" font-weight="300" fill="#222" text-anchor="middle" textLength="20" lengthAdjust="spacingAndGlyphs">3</text></svg>
<svg viewBox="0 0 76 94"><rect x="9" y="15" width="58" height="58" rx="13" fill="url(#gr)"/><path d="M31 58V30l20-5v28M31 35l20-5" fill="none" stroke="#fff" stroke-width="3"/><path d="M30 28l22-5v8l-22 5z" fill="#fff"/><ellipse cx="26.500" cy="58" rx="6" ry="5" fill="#fff"/><ellipse cx="46.500" cy="53" rx="6" ry="5" fill="#fff"/></svg>
<svg viewBox="0 0 76 94"><rect x="9" y="15" width="58" height="58" rx="13" fill="#f2f1ef"/><path d="M9 30v-2a13 13 0 0113-13h32a13 13 0 0113 13v2z" fill="#f9cb45"/><path d="M9 44.500h58M9 58.500h58" stroke="#c9c8c6"/><path d="M9 32h58" stroke="#b5b2ac" stroke-width="2" stroke-dasharray="1.200 1.200"/></svg>
<svg viewBox="0 0 76 94"><rect x="9" y="15" width="58" height="58" rx="13" fill="url(#gsp)"/><circle cx="38" cy="44" r="25" fill="#2e2f31"/><circle cx="38" cy="44" r="22" fill="#6d6e70" stroke="#a2a3a4" stroke-width="2" stroke-dasharray="1.500 1.300"/><circle cx="38" cy="44" r="17" fill="#4d4e50" stroke="#b9babb" stroke-width="2.400"/><path d="M38 44h17M38 44l-9-15M38 44l-9 15" stroke="#c5c6c7" stroke-width="3"/><circle cx="38" cy="44" r="4" fill="#8d8e90"/><circle cx="60.500" cy="21" r="13" fill="#dc4d42"/><text x="60.500" y="26" font-size="14" fill="#fff" text-anchor="middle">1</text></svg>
<svg viewBox="0 0 76 94"><rect x="9" y="15" width="58" height="58" rx="13" fill="#f1f0f0"/><rect x="13" y="19" width="50" height="50" rx="9" fill="#a6c2ef"/><path d="M13 46h50v14a9 9 0 01-9 9H22a9 9 0 01-9-9z" fill="#233a67"/><path d="M13 54c7-3 10 3 18 0l10 4v11H22q-9-1-9-9z" fill="#b9bfc4"/><path d="M16 65l8-4 8 6z" fill="#5d4632"/><path d="M40 52h22l6 19q0 4-3 4H37q-3 0-3-4z" fill="#d3d6d8" stroke="#8e9192"/><path d="M44 58h14l3 11H41z" fill="#f2f3f4"/><rect x="38" y="43" width="26" height="12" rx="3" fill="#141414"/><path d="M45 60l4 2-3 4M52 60l3 3M50 66l4 1" stroke="#666" stroke-width="1.400" fill="none"/></svg>
<svg viewBox="0 0 76 94"><path d="M38 8l31 18-13 8-18-12-19 12-12-8z" fill="#b6c45c"/><path d="M7 26l12 8v21L7 62z" fill="#84304a"/><path d="M7 62l12-8 19 12v14z" fill="#c84f63"/><path d="M69 62l-13-8-18 12v14z" fill="#5b93dc"/><path d="M69 26l-13 8v21l13 7z" fill="#3d6fbf"/><path d="M38 22l18 12-18 11-19-11z" fill="#f1f3e2"/><path d="M19 34l19 11v21L19 54z" fill="#fff"/><path d="M56 34L38 45v21l18-12z" fill="#d1d9e3"/><circle cx="38" cy="86" r="4" fill="#a9a7cc"/></svg>
<div class="rule"></div>
<svg viewBox="0 0 76 94"><path d="M15 54h46l6 24H9z" fill="#e6882f"/><path d="M20 60q18 14 36 0l1 5q-19 14-38 0z" fill="#c96a22"/><path d="M34 13q4-2 8 0l14 47q-18 11-36 0z" fill="#e08030"/><path d="M31 23q7 3 14 0l4 12q-11 5-22 0zM24 46q14 7 28 0l4 13q-18 10-36 0z" fill="#e9eaec"/></svg>
<svg viewBox="0 0 76 94"><rect x="9" y="15" width="58" height="58" rx="13" fill="#f8f8f7"/><path d="M9 30h58M9 37.500h58M9 45h58M9 52h58M9 59.500h58M12 66h52" stroke="#c4c4c2"/><path d="M19 15v58" stroke="#eec1bb"/><path d="M34 68L61 12" stroke="#5f7183" stroke-width="6"/><path d="M34 68L61 12" stroke="#b7c5d3" stroke-width="3.500"/><path d="M31.500 76l1-10 4 2z" fill="#333"/><path d="M60 27l5-14" stroke="#7b8b9c" stroke-width="2"/></svg>
<svg viewBox="0 0 76 94"><circle cx="38" cy="44" r="32" fill="#7cc2fa"/><circle cx="38" cy="44" r="30.500" fill="#48a5f5"/><g fill="#fff"><path d="M18 43h32c1-3 0-5 1-8 3 2 3 4 4 6 2 0 4 0 6 1-1 3-4 4-7 4-4 8-9 12-20 12-11 0-16-5-16-15zM22 38h5v4h-5zM27.600 38h5v4h-5zM33.200 38h5v4h-5zM38.800 38h5v4h-5zM44.400 38h4v4h-4zM27.600 33h5v4h-5zM33.200 33h5v4h-5zM38.800 33h4v4h-4zM38 28h4v4h-4z"/></g><circle cx="38" cy="86" r="4" fill="#a9a7cc"/></svg>
<div class="rule"></div>
<svg viewBox="0 0 76 94"><rect x="15" y="14" width="22" height="20" rx="3" fill="#3f9ccf"/><rect x="42" y="18" width="20" height="16" rx="3" fill="#3f9ccf"/><path d="M22 16h16l14 11v4H22z" fill="#ececec"/><path d="M35 14h7v15h-7z" fill="#555"/><path d="M8 27a4 4 0 014-4h8l5 5h39a4 4 0 014 4v37a4 4 0 01-4 4H12a4 4 0 01-4-4z" fill="#4ba5d8"/><path d="M8 31h60v37a4 4 0 01-4 4H12a4 4 0 01-4-4z" fill="#74c7f6"/></svg>
<svg viewBox="0 0 76 94"><path d="M13 19h50l-6 54q-1 4-19 4t-19-4z" fill="url(#gt)"/><ellipse cx="38" cy="20" rx="25.500" ry="5" fill="#595b5e"/><path d="M17 19l4-6 6 2 5-4 6 4 7-3 6 4 5-1 3 4-9 3-7-2-7 2-7-2-6 2z" fill="#d2d3d4"/><path d="M22 16l5 3M34 14l3 5 4-3M48 16l-3 4M28 14l2 5M54 16l-3 4" stroke="#4d4e50" stroke-width="1.800"/><path d="M32 17l4 2M50 14l3 2" stroke="#4a8ed4" stroke-width="2"/></svg>
</footer>
</body>
</html>
